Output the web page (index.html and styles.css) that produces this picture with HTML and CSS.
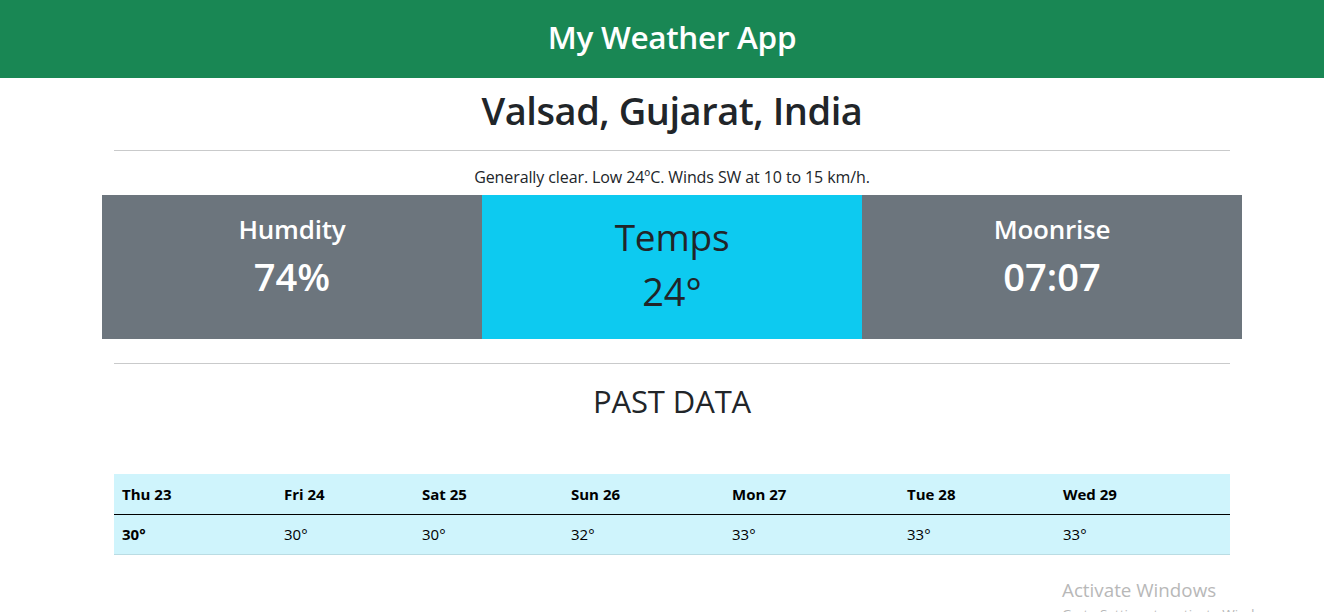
FILE: index.html
```html
<!DOCTYPE html>
<html lang="en">
<head>
<meta charset="utf-8">
<title>My Weather App</title>
<link rel="stylesheet" href="styles.css">
</head>
<body>
<header class="topbar">
  <h2 class="brand">My Weather App</h2>
</header>
<main class="main">
  <h1 class="city">Valsad, Gujarat, India</h1>
  <hr class="rule">
  <p class="summary">Generally clear. Low 24ºC. Winds SW at 10 to 15 km/h.</p>
  <section class="cards">
    <div class="card card-gray">
      <h3 class="card-label">Humdity</h3>
      <div class="card-value">74%</div>
    </div>
    <div class="card card-cyan">
      <h2 class="card-label big">Temps</h2>
      <div class="card-value big">24°</div>
    </div>
    <div class="card card-gray">
      <h3 class="card-label">Moonrise</h3>
      <div class="card-value">07:07</div>
    </div>
  </section>
  <hr class="rule rule-2">
  <h2 class="past">PAST DATA</h2>
  <table class="past-table">
    <colgroup>
      <col class="c1"><col class="c2"><col class="c3"><col class="c4"><col class="c5"><col class="c6"><col class="c7">
    </colgroup>
    <thead>
      <tr><th>Thu 23</th><th>Fri 24</th><th>Sat 25</th><th>Sun 26</th><th>Mon 27</th><th>Tue 28</th><th>Wed 29</th></tr>
    </thead>
    <tbody>
      <tr><th>30°</th><td>30°</td><td>30°</td><td>32°</td><td>33°</td><td>33°</td><td>33°</td></tr>
    </tbody>
  </table>
</main>
<div class="watermark">
  <div class="wm-title">Activate Windows</div>
  <div class="wm-sub">Go to Settings to activate Windows.</div>
</div>
</body>
</html>
```

FILE: styles.css
```css
* { box-sizing: border-box; }
html, body { margin: 0; padding: 0; }
body {
  font-family: "Open Sans", "Noto Sans", sans-serif;
  color: #212529;
  background: #fff;
  overflow: hidden;
  height: 612px;
  position: relative;
}
.topbar {
  background: #198754;
  height: 78px;
  display: flex;
  align-items: center;
  justify-content: center;
  padding-left: 20px;
  padding-bottom: 4px;
}
.brand {
  margin: 0;
  color: #fff;
  font-size: 31.5px;
  font-weight: 600;
  line-height: 1;
  letter-spacing: -0.3px;
}
.main {
  padding-left: 20px;
  display: flex;
  flex-direction: column;
  align-items: center;
}
.city {
  margin: 8px 0 0;
  font-size: 38px;
  font-weight: 600;
  line-height: 48px;
  letter-spacing: -0.45px;
}
.rule {
  width: 1116px;
  border: 0;
  border-top: 1px solid #c9cacb;
  margin: 16px 0 0;
}
.summary {
  margin: 16px 0 0;
  font-size: 16px;
  font-weight: 500;
  line-height: 20px;
  letter-spacing: -0.1px;
}
.cards {
  margin-top: 8px;
  width: 1140px;
  display: grid;
  grid-template-columns: repeat(3, 1fr);
  height: 144px;
}
.card {
  display: flex;
  flex-direction: column;
  align-items: center;
  padding-top: 17px;
}
.card-gray { background: #6c757d; color: #fff; }
.card-cyan { background: #0dcaf0; color: #212529; }
.card-label {
  margin: 0;
  font-size: 26px;
  font-weight: 600;
  line-height: 34px;
  letter-spacing: -0.2px;
}
.card-value {
  font-size: 38px;
  font-weight: 600;
  line-height: 50px;
  margin-top: 5px;
}
.card-label.big {
  font-size: 37px;
  font-weight: 500;
  line-height: 48px;
  margin-top: 1px;
}
.card-value.big {
  font-size: 38px;
  font-weight: 500;
  line-height: 50px;
  margin-top: 5px;
}
.rule-2 { margin-top: 24px; }
.past {
  margin: 19px 0 0;
  font-size: 31px;
  font-weight: 500;
  line-height: 36px;
  letter-spacing: -0.1px;
}
.past-table {
  margin-top: 55px;
  width: 1116px;
  border-collapse: collapse;
  background: #cff4fc;
  table-layout: fixed;
  font-size: 15px;
}
.c1 { width: 162px; }
.c2 { width: 138px; }
.c3 { width: 149px; }
.c4 { width: 161px; }
.c5 { width: 175px; }
.c6 { width: 156px; }
.c7 { width: 175px; }
.past-table th,
.past-table td {
  text-align: left;
  padding: 0 8px;
  height: 40px;
  color: #000;
}
.past-table th { font-weight: 700; }
.past-table td { font-weight: 400; }
.past-table thead tr { border-bottom: 1px solid #000; }
.past-table tbody tr { border-bottom: 1px solid #badce3; }
.watermark {
  position: absolute;
  left: 1062px;
  top: 578px;
  color: #b8b8b8;
  white-space: nowrap;
}
.wm-title {
  font-size: 18.8px;
  line-height: 24px;
  font-weight: 400;
}
.wm-sub {
  font-size: 13.5px;
  line-height: 16px;
  margin-top: 4px;
}
```
